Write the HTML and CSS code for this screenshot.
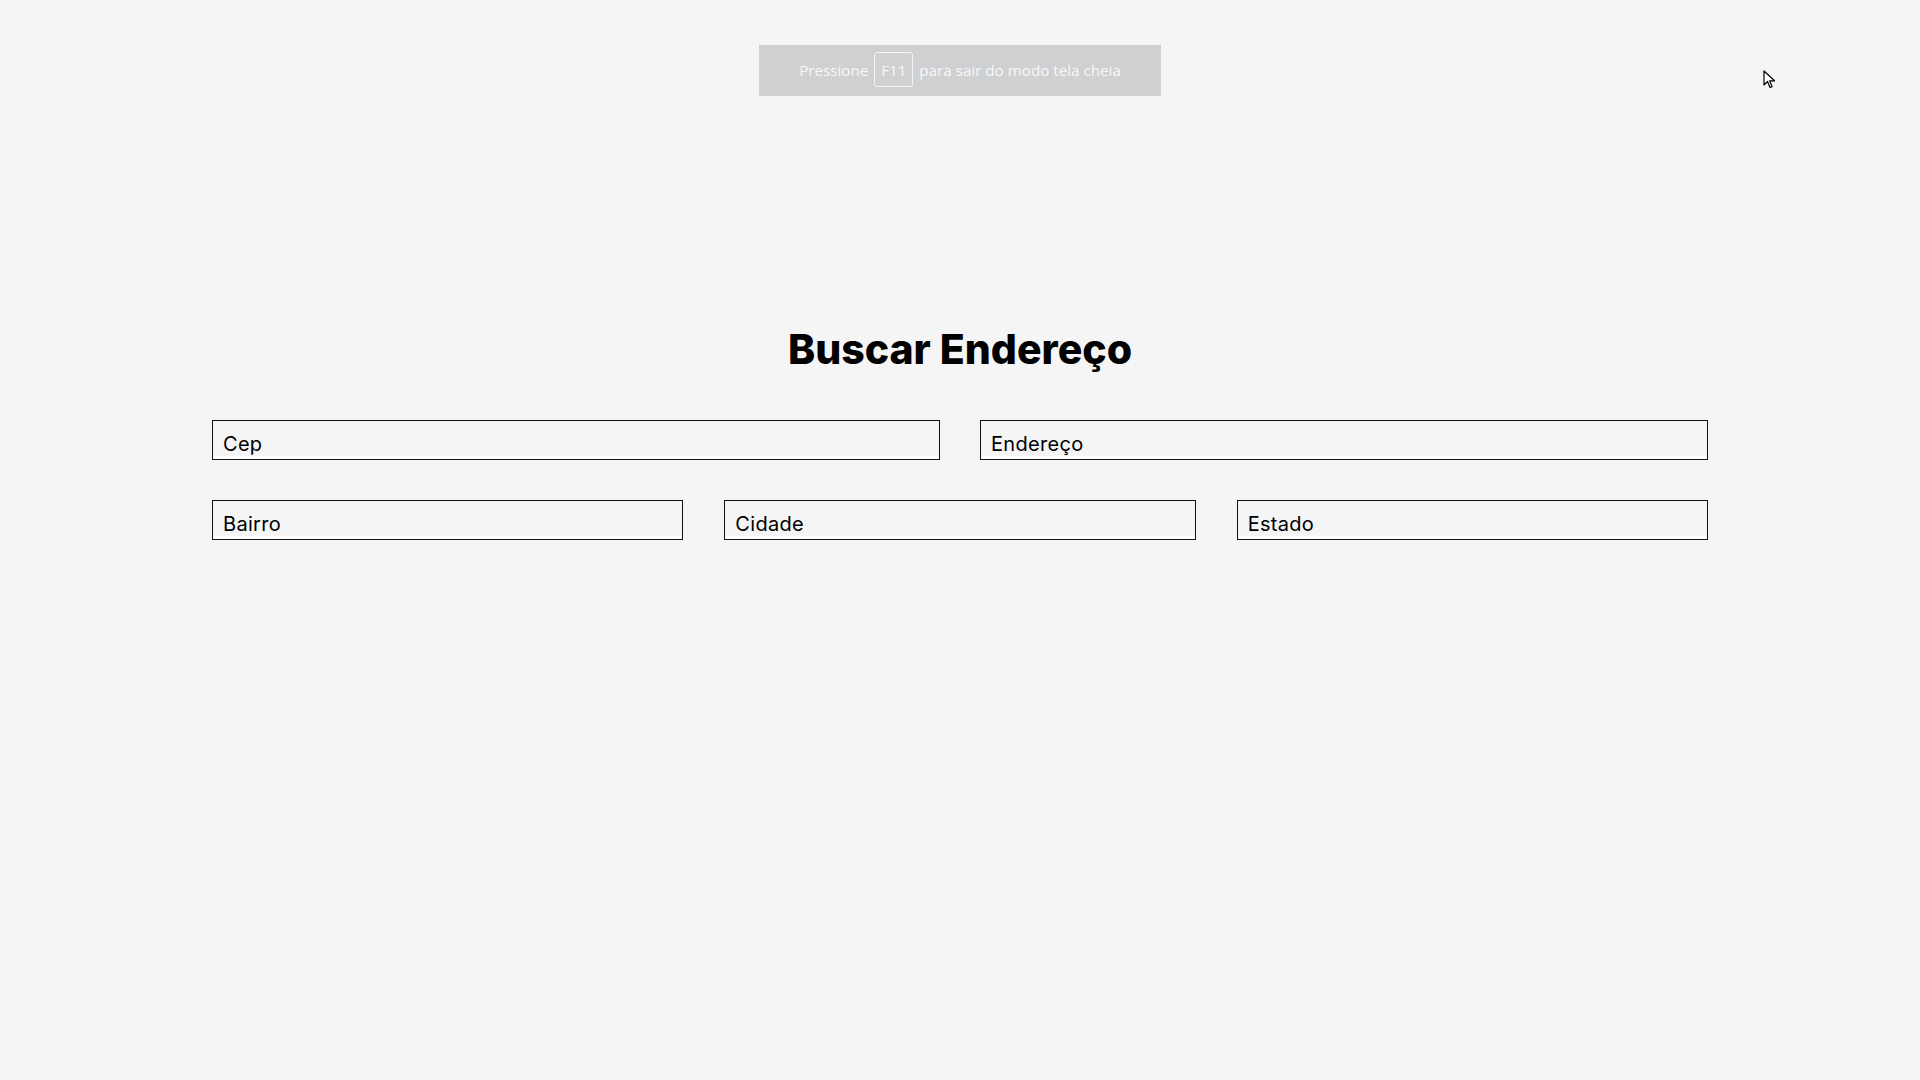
FILE: index.html
```html
<!DOCTYPE html>
<html lang="pt-BR">
<head>
<meta charset="utf-8">
<title>Buscar Endereço</title>
<link rel="stylesheet" href="styles.css">
</head>
<body>
<div class="fs-toast">Pressione <span class="key">F11</span> para sair do modo tela cheia</div>
<svg class="cursor" width="13" height="19" viewBox="0 0 13 19"><path d="M1 1 L1 15 L4.5 11.5 L7 17.5 L9 16.6 L6.6 10.8 L11.5 10.8 Z" fill="#fff" stroke="#000" stroke-width="1.2" stroke-linejoin="round"/></svg>
<main class="page">
  <h1 class="title">Buscar Endereço</h1>
  <form class="form">
    <div class="row row-2">
      <input class="field" type="text" placeholder="Cep">
      <input class="field" type="text" placeholder="Endereço">
    </div>
    <div class="row row-3">
      <input class="field" type="text" placeholder="Bairro">
      <input class="field" type="text" placeholder="Cidade">
      <input class="field" type="text" placeholder="Estado">
    </div>
  </form>
</main>
</body>
</html>
```
FILE: styles.css
```css
* { box-sizing: border-box; }
html, body { margin: 0; padding: 0; }
body {
  background: #f5f5f5;
  font-family: "Inter", "Liberation Sans", sans-serif;
  min-height: 1080px;
}
.page {
  width: 1496px;
  margin: 0 auto;
  padding-top: 322px;
}
.title {
  margin: 0;
  text-align: center;
  font-size: 41px;
  line-height: 54px;
  font-weight: 800;
  color: #000;
  letter-spacing: 0;
}
.form {
  margin-top: 44px;
  display: flex;
  flex-direction: column;
  gap: 40px;
}
.row { display: grid; }
.row-2 { grid-template-columns: 1fr 1fr; column-gap: 40px; }
.row-3 { grid-template-columns: 1fr 1fr 1fr; column-gap: 41px; }
.field {
  display: block;
  width: 100%;
  height: 40px;
  border: 1.5px solid #111;
  background: #f5f5f5;
  box-shadow: inset 0 -3px 0 #fff;
  padding: 8px 10px 0;
  font-family: "Inter", "Liberation Sans", sans-serif;
  font-size: 20px;
  letter-spacing: 0.3px;
  color: #000;
  outline: none;
  border-radius: 0;
}
.field::placeholder { color: #000; opacity: 1; }
.fs-toast {
  position: absolute;
  top: 45px;
  left: 759px;
  width: 402px;
  height: 51px;
  padding-bottom: 2px;
  background: #cfd0d2;
  color: #f7f7f7;
  font-family: "Open Sans", "Liberation Sans", sans-serif;
  font-size: 15.2px;
  display: flex;
  align-items: center;
  justify-content: center;
  gap: 6px;
}
.key {
  display: inline-flex;
  align-items: center;
  justify-content: center;
  width: 39px;
  height: 35px;
  border: 1px solid #f4f4f4;
  border-radius: 3px;
}
.cursor {
  position: absolute;
  left: 1763px;
  top: 70px;
}
```
